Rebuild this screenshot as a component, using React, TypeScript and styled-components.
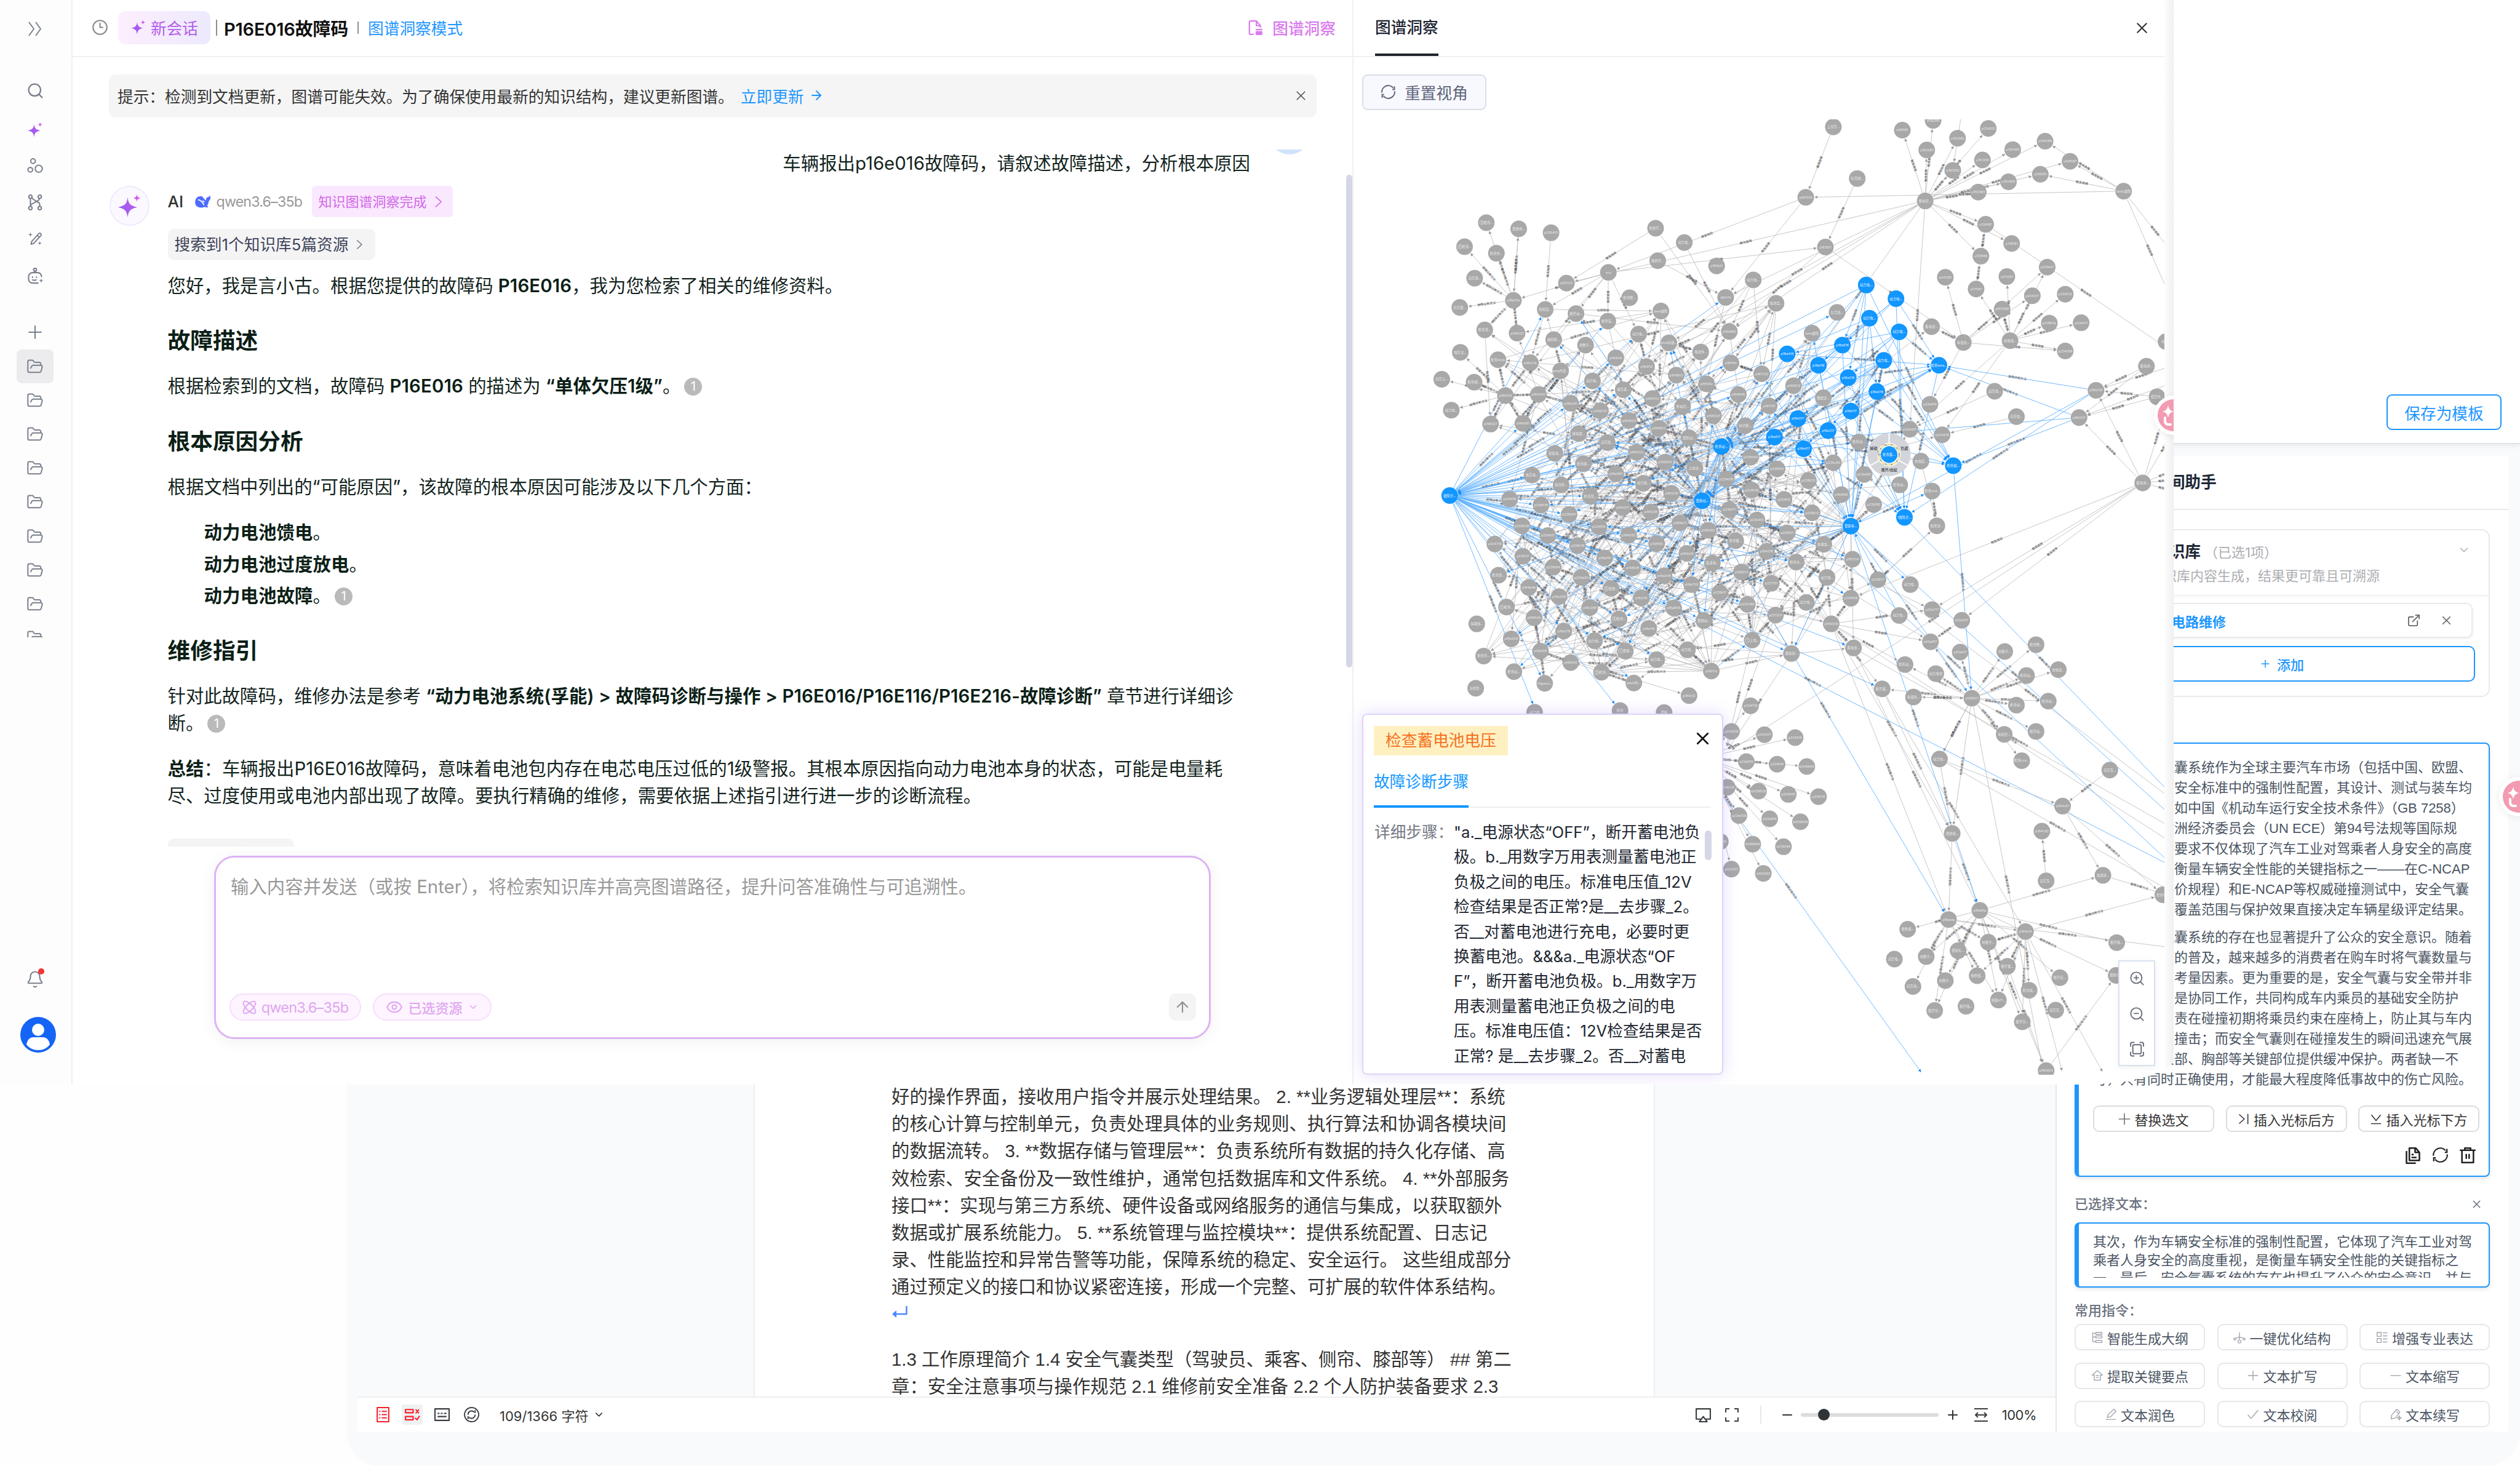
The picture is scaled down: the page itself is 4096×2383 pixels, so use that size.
import React from "react";
import styled, {createGlobalStyle} from "styled-components";
import {
  ArrowRight,
  ArrowUp,
  Bell,
  ChevronDown,
  Clock3,
  ExternalLink,
  Eye,
  FolderOpen,
  Minus,
  Plus,
  Search,
  X,
  ZoomIn,
  ZoomOut,
} from "lucide-react";

const GlobalStyle = createGlobalStyle`
  * {
    box-sizing: border-box;
  }
  body {
    margin: 0;
    background: #fefefe;
    font-family: Inter, "Noto Sans CJK SC", sans-serif;
    font-size: 25.7px;
    overflow: hidden;
  }
  svg {
    display: block;
    flex-shrink: 0;
  }
`;

const Desktop = styled.div`
  position: relative;
  width: 4096px;
  height: 2383px;
  overflow: hidden;
`;

/* ---------- graph data ---------- */

type GNode = [number, number, string];

const blueNodes: GNode[] = [
  [957, 565, "动力电..."], [1013, 607, "动力电..."], [963, 667, "动力电..."], [1019, 709, "动力电..."],
  [912, 750, "p16e516"], [808, 777, "p16e416"], [990, 797, "动力电..."], [1094, 812, "检查bms..."],
  [867, 812, "p16e116"], [923, 850, "p16e216"], [977, 893, "p16e016"], [928, 953, "p16e117"],
  [828, 976, "p16e017"], [885, 1013, "p16e217"], [784, 1033, "p16e517"], [839, 1069, "p16e417"],
  [684, 1062, "检查动..."], [1000, 1087, "检查蓄..."], [1121, 1121, "检查模..."], [172, 1213, "故障诊..."],
  [648, 1229, "更换动..."], [928, 1307, "更换车..."], [1029, 1280, "1故障诊..."],
];

const grayNodes: GNode[] = [
  [895, 78, "上高压..."], [1025, 88, "p161f91"], [1083, 58, "u150281"], [1129, 113, "u150382"], [1187, 83, "p224201"],
  [1071, 149, "u150283"], [1233, 148, "u150483"], [1294, 122, "u108086"], [1176, 180, "u150291"], [1341, 184, "u108067"],
  [1120, 212, "u150282"], [1285, 224, "u108081"], [1225, 247, "u150482"], [1168, 279, "u150383"], [1442, 276, "dcdc故障"],
  [940, 237, "信号线..."], [843, 295, "p161328"], [1068, 306, "整车控..."], [1182, 378, "u108187"], [1231, 437, "u108181"],
  [1173, 476, "u108186"], [1298, 510, "p224e17"], [1222, 539, "u011287"], [1106, 541, "u041281"], [1164, 577, "u011187"],
  [1270, 598, "p224017"], [1332, 593, "p226012"], [1213, 639, "p157268"], [1302, 682, "p22801a"], [1362, 681, "p22e011"],
  [1080, 693, "蓄电池..."], [1332, 768, "p224098"], [1140, 742, "车载充..."], [1228, 736, "充电线..."], [241, 373, "③检查..."],
  [302, 392, "更换充..."], [363, 404, "p226401"], [200, 447, "④检查..."], [260, 467, "检查充..."], [219, 544, "高压线..."],
  [392, 559, "p157012"], [471, 526, "vcu"], [292, 612, "p16e21a"], [191, 634, "高压器..."], [352, 640, "终端温..."],
  [410, 653, "断开动..."], [511, 604, "检查整..."], [560, 390, "检修开..."], [614, 434, "动力电..."], [564, 490, "维修开..."],
  [675, 506, "p161b01"], [744, 549, "动力电..."], [880, 448, "p163b11"], [692, 603, "gwcna"], [787, 621, "电池温..."],
  [570, 645, "bms故障"], [470, 676, "检查第..."], [238, 703, "检查风..."], [299, 713, "p164021"], [368, 733, "继续检..."],
  [428, 750, "用数字..."], [528, 716, "动力电..."], [699, 708, "p16d682"], [855, 713, "bms故障"], [902, 649, "信号线..."],
  [585, 743, "bms存储..."], [645, 771, "电流传..."], [485, 789, "p164114"], [192, 772, "电压主..."], [263, 795, "检查dcdc"],
  [324, 804, "p16c01a"], [381, 829, "bms内部..."], [441, 860, "动力电..."], [543, 816, "p164f12"], [599, 842, "p164802"],
  [702, 805, "p16f14c"], [760, 838, "p161722"], [157, 855, "高压上..."], [218, 864, "检查模..."], [656, 869, "p16f04c"],
  [499, 887, "电压采..."], [820, 875, "p169202"], [277, 905, "p164219"], [339, 902, "p164220"], [400, 929, "p164c91"],
  [554, 914, "p164702"], [611, 939, "整车控..."], [716, 902, "p16464b"], [774, 937, "p161701"], [876, 912, "数据读..."],
  [175, 950, "动力电..."], [456, 952, "p16a020"], [510, 982, "p164502"], [669, 967, "p158223"], [249, 993, "p158227"],
  [310, 991, "p16e081"], [415, 1022, "继电器..."], [566, 1006, "p164602"], [729, 998, "用诊断..."], [469, 1050, "高压监..."],
  [623, 1035, "更换动..."], [943, 1048, "检查动..."], [1039, 1009, "p22e517"], [1100, 1026, "p224218"], [1077, 932, "p22e616"],
  [1199, 892, "高压线..."], [1240, 970, "高压电..."], [370, 1083, "采集线..."], [524, 1080, "p164202"], [424, 1115, "检查模..."],
  [578, 1110, "p158292"], [739, 1095, "p228042"], [895, 1112, "p22bc92"], [634, 1129, "上电动..."], [789, 1131, "p228142"],
  [327, 1150, "电芯电..."], [485, 1146, "p16a080"], [848, 1167, "p228012"], [693, 1162, "p224018"], [953, 1148, "p22b492"],
  [382, 1180, "电流传..."], [537, 1175, "动力电..."], [1060, 1107, "充电插..."], [1020, 1180, "检查动..."], [590, 1206, "p181228"],
  [741, 1196, "p228016"], [437, 1215, "检查风..."], [910, 1210, "p182692"], [1081, 1199, "检查vcd..."], [285, 1224, "p224f16"],
  [802, 1225, "p22f412"], [344, 1242, "p228018"], [498, 1250, "p164201"], [971, 1241, "p22b192"], [397, 1271, "p229087"],
  [551, 1263, "p161228"], [699, 1256, "p22b111"], [855, 1266, "p228012"], [751, 1288, "p22b412"], [308, 1306, "p228028"],
  [453, 1309, "p224812"], [606, 1297, "p184b01"], [1090, 1306, "检查交..."], [357, 1336, "p224b12"], [509, 1335, "p164092"],
  [659, 1320, "p158282"], [808, 1328, "p22f601"], [257, 1362, "p224716"], [562, 1361, "p158192"], [711, 1352, "检查蓄..."],
  [877, 1363, "车辆发..."], [413, 1367, "p228016"], [310, 1400, "p224117"], [769, 1385, "p164218"], [464, 1405, "p16a118"],
  [619, 1391, "p161b09"], [931, 1409, "p161704"], [825, 1418, "检查水..."], [367, 1433, "p228184"], [517, 1436, "p158b18"],
  [667, 1421, "集成电..."], [722, 1448, "p158201"], [264, 1458, "检查界..."], [420, 1465, "p228a20"], [576, 1460, "p16e078"],
  [883, 1465, "动力电..."], [979, 1472, "p228117"], [778, 1483, "p221701"], [628, 1487, "p16e705"], [1040, 1487, "动力电..."],
  [321, 1496, "p164b4b"], [476, 1499, "④更换..."], [681, 1512, "p228b17"], [378, 1524, "p16e208"], [533, 1528, "p16e119"],
  [928, 1529, "p224616"], [844, 1542, "动力电..."], [733, 1548, "p220285"], [1485, 815, "蓄电池..."], [1390, 889, "p160016"],
  [1505, 909, "低压供..."], [1358, 973, "p160017"], [1478, 1174, "蓄电池..."], [1522, 739, "动力..."],
  [279, 1556, "②检查..."], [223, 1608, "车辆熄..."], [331, 1589, "p16954b"], [436, 1558, "p16c288"], [491, 1593, "③检查..."],
  [594, 1559, "p16a806"], [547, 1622, "p16a119"], [651, 1598, "更换动..."], [1019, 1582, "动力电..."], [1081, 1564, "p22e717"],
  [1137, 1597, "p22e517"], [786, 1581, "p221201"], [891, 1608, "p159209"], [288, 1654, "p16e206"], [387, 1630, "p16e216"],
  [445, 1660, "动力电..."], [1078, 1663, "p22e617"], [742, 1658, "①上电..."], [933, 1682, "蓄电池..."], [1134, 1695, "p22e417"],
  [1277, 1672, "检查整..."], [1218, 1693, "用数字..."], [236, 1707, "检查环..."], [343, 1692, "p16e106"], [400, 1727, "p164410"],
  [503, 1692, "①更换..."], [620, 1688, "动力电..."], [562, 1718, "动力电..."], [816, 1699, "蓄电池..."], [1030, 1733, "检查动..."],
  [293, 1755, "检查动..."], [458, 1757, "②检查..."], [665, 1753, "p16f01c"], [1088, 1761, "动力电池"], [1319, 1749, "充电温..."],
  [1259, 1767, "检查动..."], [351, 1791, "03gwcn..."], [519, 1790, "pack内..."], [221, 1806, "冷却管..."], [623, 1829, "p184c12"],
  [987, 1808, "断开蓄..."], [1046, 1833, "车载充..."], [1156, 1837, "p158501"], [1300, 1846, "检查动..."], [1240, 1858, "检查动..."],
  [739, 1860, "p224719"], [332, 1880, "动力电"], [493, 1875, "检查"], [576, 1881, "更换"], [1277, 1939, "断开动..."],
  [1217, 1948, "电机控..."], [703, 1939, "p224519"], [765, 1949, "p224217"], [823, 1958, "p224519"], [1250, 2029, "检查cca..."],
  [1095, 2024, "动力电..."], [1416, 2058, "高压互..."], [731, 2032, "p22e519"], [789, 2040, "p224f19"], [845, 2047, "b009849"],
  [695, 2111, "p224019"], [754, 2123, "b009829"], [810, 2133, "p224919"], [867, 2140, "p224119"], [1327, 2169, "p164c91"],
  [717, 2198, "p22e009"], [775, 2208, "p22e619"], [833, 2217, "b009948"], [1119, 2253, "更换档..."], [1288, 2246, "p164c92"],
  [743, 2286, "b099948"], [801, 2294, "b219094"], [682, 2278, "p22419"], [1296, 2399, "高压互..."], [1403, 2382, "电源状..."],
  [703, 2363, "p224317"], [763, 2376, "b100053"], [1516, 2442, "检查线..."], [1171, 2490, "p16d61a"], [1112, 2518, "p16ea1a"],
  [1035, 2548, "维修或..."], [1257, 2555, "p164c14"], [1130, 2614, "更新标..."], [1187, 2588, "用数字..."], [1429, 2589, "断开维..."],
  [1010, 2640, "高压电..."], [1070, 2632, "用数字..."], [1223, 2662, "断开蓄..."], [1428, 2690, "更换分..."], [1045, 2724, "高压线..."],
  [1106, 2706, "用数字..."], [1166, 2691, "维修或..."], [1322, 2697, "断开高..."], [1264, 2736, "检查电..."], [1086, 2798, "断开空..."],
  [1145, 2785, "断开维..."], [1206, 2766, "测量b71..."], [1314, 2797, "高压互..."], [1251, 2833, "断开空..."], [1296, 2983, "p160603"],
];

type Tone = "gray" | "blue";
type Pt = [number, number];
interface IEdge {
  a: Pt;
  b: Pt;
  tone: Tone;
  label?: string;
}

const FAULT = "触发故障";
const METHOD = "故障诊断方法";
const SHOWN = "出现故障";

// 레이아웃 좌표 -> 화면 좌표
const sx = (v: number) => 8 + v * 0.8625;
const sy = (v: number) => v * 0.52806 - 29;

const inBox = (n: GNode, [x0, y0, x1, y1]: number[]) => n[0] >= x0 && n[0] <= x1 && n[1] >= y0 && n[1] <= y1;

const fan = (hub: Pt, box: number[], tone: Tone, label: string, step = 1, offset = 0): IEdge[] =>
  grayNodes
    .filter((n) => inBox(n, box) && !(n[0] === hub[0] && n[1] === hub[1]))
    .filter((_, i) => i % step === offset)
    .map((n) => ({a: hub, b: [n[0], n[1]], tone, label}));

const links = (tone: Tone, label: string, list: number[][]): IEdge[] =>
  list.map(([x0, y0, x1, y1]) => ({a: [x0, y0], b: [x1, y1], tone, label}));

const core = grayNodes.filter((n) => inBox(n, [230, 620, 960, 1770]));
const mesh: IEdge[] = core.flatMap((n, i) => {
  const t = core[(i * 41 + 17) % core.length];
  const u = core[(i * 7 + 3) % core.length];
  return [
    {a: [n[0], n[1]] as Pt, b: [t[0], t[1]] as Pt, tone: "gray" as Tone, label: i % 2 ? FAULT : METHOD},
    {a: [n[0], n[1]] as Pt, b: [u[0], u[1]] as Pt, tone: "gray" as Tone, label: i % 3 ? FAULT : SHOWN},
  ].filter((e) => Math.hypot(e.a[0] - e.b[0], e.a[1] - e.b[1]) < 620);
});

// 왼쪽 아래에서 오른쪽 위로 향하는 관계
const diagonals: IEdge[] = core.flatMap((n, i) =>
  core
    .filter((t) => {
      const dx = t[0] - n[0];
      const slope = (n[1] - t[1]) / (dx || 1);
      return dx > 110 && dx < 330 && slope > 1.5 && slope < 2.6;
    })
    .filter((_, k) => (k + i) % 5 === 0)
    .slice(0, 3)
    .map((t) => ({a: [n[0], n[1]] as Pt, b: [t[0], t[1]] as Pt, tone: "gray" as Tone, label: METHOD}))
);

const clusterTop = blueNodes.slice(0, 16);
const edges: IEdge[] = [
  ...mesh,
  ...diagonals,
  ...fan([1068, 306], [1000, 40, 1380, 290], "gray", FAULT),
  ...links("gray", FAULT, [
    [1068, 306, 1182, 378], [1068, 306, 1231, 437], [1068, 306, 1173, 476], [1068, 306, 392, 559], [1068, 306, 692, 603],
    [1068, 306, 699, 708], [1068, 306, 585, 743], [1068, 306, 543, 816], [1068, 306, 1039, 1009], [1068, 306, 820, 875],
    [1442, 276, 1341, 184], [1442, 276, 1285, 224], [1442, 276, 1294, 122], [1442, 276, 843, 295], [1442, 276, 1540, 640],
    [1442, 276, 1560, 520], [1140, 0, 1120, 212], [895, 78, 843, 295], [940, 237, 880, 448], [560, 390, 392, 559],
    [843, 295, 471, 526], [843, 295, 692, 603], [471, 526, 880, 448], [471, 526, 292, 612], [471, 526, 410, 653],
    [471, 526, 470, 676], [471, 526, 324, 804], [471, 526, 528, 716], [471, 526, 352, 640], [880, 448, 699, 708],
    [880, 448, 1140, 742], [560, 390, 699, 708], [614, 434, 699, 708], [564, 490, 692, 603], [744, 549, 699, 708],
    [744, 549, 760, 838], [744, 549, 543, 816], [744, 549, 599, 842], [787, 621, 760, 838], [787, 621, 774, 937],
    [787, 621, 702, 805], [787, 621, 656, 869], [1182, 378, 1173, 476], [1173, 476, 1164, 577], [692, 603, 656, 869],
    [363, 404, 352, 640], [302, 392, 292, 612], [570, 645, 543, 816], [570, 645, 566, 1006],
    [1485, 815, 1390, 889], [1505, 909, 1390, 889], [1485, 815, 1358, 973], [1505, 909, 1358, 973], [1560, 800, 1390, 889],
    [1560, 850, 1358, 973], [1478, 1174, 1390, 889], [1478, 1174, 1358, 973], [1478, 1174, 1530, 900], [1478, 1174, 1560, 950],
    [1478, 1174, 1560, 1120], [1478, 1174, 1560, 1160], [1478, 1174, 1560, 1210], [1478, 1174, 1137, 1597],
    [1478, 1174, 1081, 1564], [1478, 1174, 690, 2010], [1478, 1174, 928, 1529], [1182, 378, 1560, 800],
    [1140, 742, 1077, 932], [1228, 736, 1100, 1026], [1228, 736, 1039, 1009], [1199, 892, 1039, 1009],
    [1240, 970, 1100, 1026], [1080, 693, 1140, 742], [1060, 1107, 1090, 1306], [1081, 1199, 1090, 1306],
    [1090, 1306, 979, 1472], [742, 1658, 690, 2010], [816, 1699, 690, 2010], [786, 1581, 690, 2010],
    [1416, 2058, 1327, 2169], [1296, 2399, 1288, 2246], [1137, 1597, 1078, 1663],
  ]),
  ...fan([292, 612], [180, 340, 320, 720], "gray", METHOD),
  ...fan([1140, 742], [1100, 480, 1340, 800], "gray", FAULT, 2, 0),
  ...fan([1228, 736], [1150, 480, 1380, 800], "gray", FAULT),
  ...fan([277, 905], [150, 760, 340, 1010], "gray", METHOD),
  ...fan([339, 902], [240, 700, 520, 1030], "gray", METHOD, 2, 0),
  ...fan([648, 1229], [230, 600, 1100, 1820], "gray", METHOD, 3, 0),
  ...fan([928, 1307], [500, 800, 1120, 1820], "gray", METHOD, 4, 1),
  ...fan([684, 1062], [230, 600, 900, 1500], "gray", METHOD, 4, 2),
  ...fan([665, 1753], [230, 1280, 900, 1840], "gray", METHOD, 4, 0),
  ...fan([742, 1658], [560, 1180, 1000, 1700], "gray", FAULT, 3, 1),
  ...fan([891, 1608], [700, 1300, 1100, 1850], "gray", FAULT, 2, 0),
  ...fan([343, 1692], [210, 1430, 640, 1840], "gray", METHOD, 3, 0),
  ...fan([458, 1757], [250, 1300, 680, 1840], "gray", METHOD, 4, 0),
  ...fan([1156, 1837], [980, 1640, 1330, 2050], "gray", METHOD),
  ...fan([650, 2020], [690, 1840, 880, 2390], "gray", FAULT),
  ...fan([1171, 2490], [1000, 2540, 1440, 2850], "gray", METHOD, 2, 0),
  ...fan([1112, 2518], [1000, 2540, 1300, 2850], "gray", METHOD, 2, 1),
  ...fan([1257, 2555], [1140, 2560, 1440, 2850], "gray", METHOD, 2, 0),
  ...links("gray", METHOD, [
    [891, 1608, 1112, 2518], [891, 1608, 1119, 2253], [933, 1682, 1171, 2490], [987, 1808, 1257, 2555],
    [987, 1808, 1119, 2253], [1119, 2253, 1112, 2518], [1119, 2253, 1171, 2490], [1095, 2024, 1119, 2253],
    [1156, 1837, 1095, 2024], [1156, 1837, 1119, 2253], [1156, 1837, 1290, 2983], [1095, 2024, 1327, 2169],
    [1095, 2024, 1540, 2440], [1171, 2490, 1403, 2382], [1257, 2555, 1516, 2442], [1112, 2518, 1560, 2610],
    [1327, 2169, 1403, 2382], [1327, 2169, 1516, 2442], [933, 1682, 1560, 2260], [891, 1608, 1560, 2310],
    [979, 1472, 1560, 2180], [1046, 1833, 1156, 1837], [1223, 2662, 1296, 2983], [1257, 2555, 1330, 3010],
    [1296, 2983, 1428, 2690], [1257, 2555, 1410, 3010], [1171, 2490, 1296, 2983], [1403, 2382, 1540, 2450],
  ]),
  ...fan([172, 1213], [300, 560, 1000, 1830], "blue", METHOD, 3, 0),
  ...fan([172, 1213], [240, 1350, 700, 1850], "blue", METHOD, 5, 2),
  ...fan([648, 1229], [230, 620, 1000, 1800], "blue", METHOD, 6, 1),
  ...fan([928, 1307], [400, 700, 1120, 1800], "blue", METHOD, 8, 3),
  ...fan([684, 1062], [360, 700, 1000, 1800], "blue", METHOD, 8, 5),
  ...clusterTop.flatMap((n, i) => {
    const targets: Pt[] = [[684, 1062], [648, 1229], [928, 1307], [1094, 812], [1121, 1121], [1029, 1280], [172, 1213]];
    return targets
      .filter((_, k) => (k + i) % 2 === 0 || k < 2)
      .map((t) => ({a: [n[0], n[1]] as Pt, b: t, tone: "blue" as Tone, label: METHOD}));
  }),
  ...links("blue", SHOWN, [
    [957, 565, 912, 750], [957, 565, 923, 850], [1013, 607, 912, 750], [963, 667, 867, 812], [1019, 709, 808, 777],
    [1019, 709, 923, 850], [963, 667, 977, 893], [990, 797, 977, 893], [990, 797, 828, 976], [990, 797, 885, 1013],
    [990, 797, 784, 1033], [1019, 709, 928, 953], [990, 797, 839, 1069],
  ]),
  ...links("blue", METHOD, [
    [1390, 889, 1094, 812], [1390, 889, 1029, 1280], [1390, 889, 928, 1307], [1358, 973, 1094, 812], [1358, 973, 684, 1062],
    [1358, 973, 1121, 1121], [1121, 1121, 1156, 1837], [928, 1307, 1156, 1837], [1029, 1280, 1560, 2180], [928, 1307, 1560, 2240],
    [172, 1213, 335, 1880], [560, 1850, 1070, 3010], [665, 1753, 742, 1658], [648, 1229, 1112, 2518], [684, 1062, 1560, 2390],
    [172, 1213, 1540, 2360], [1019, 1582, 928, 1307], [172, 1213, 493, 1875], [928, 1307, 1171, 2490],
  ]),
];

const Edge = ({a, b, tone, label}: IEdge) => {
  const x0 = sx(a[0]);
  const y0 = sy(a[1]);
  const x1 = sx(b[0]);
  const y1 = sy(b[1]);
  const len = Math.hypot(x1 - x0, y1 - y0) || 1;
  const ux = (x1 - x0) / len;
  const uy = (y1 - y0) / len;
  let angle = (Math.atan2(uy, ux) * 180) / Math.PI;
  if (angle > 90) angle -= 180;
  if (angle < -90) angle += 180;
  const mx = (x0 + x1) / 2;
  const my = (y0 + y1) / 2;
  return (
    <g>
      <line
        x1={x0 + ux * 14}
        y1={y0 + uy * 14}
        x2={x1 - ux * 15}
        y2={y1 - uy * 15}
        stroke={tone === "blue" ? "#62b2ff" : "#b4b4b8"}
        strokeWidth={tone === "blue" ? 0.9 : 0.75}
        markerEnd={`url(#arrow-${tone})`}
      />
      {label && len > 50 && (
        <text x={mx} y={my + 1.8} transform={`rotate(${angle} ${mx} ${my})`} fontSize="5" textAnchor="middle" fill="#3f3f43">
          {label}
        </text>
      )}
    </g>
  );
};

const Graph = () => (
  <svg width="1318" height="1553" viewBox="0 0 1318 1553">
    <defs>
      {(["gray", "blue"] as Tone[]).map((t) => (
        <marker key={t} id={`arrow-${t}`} viewBox="0 0 6 6" refX="5" refY="3" markerWidth="5" markerHeight="5" markerUnits="userSpaceOnUse" orient="auto">
          <path d="M0 0 6 3 0 6z" fill={t === "blue" ? "#1890ff" : "#9a9aa0"} />
        </marker>
      ))}
    </defs>
    {edges.map((e, i) => (
      <Edge key={i} {...e} />
    ))}
    {grayNodes.map(([x, y, label], i) => (
      <g key={i}>
        <circle cx={sx(x)} cy={sy(y)} r="13.5" fill="#a8a8a8" />
        <text x={sx(x)} y={sy(y) + 2} fontSize="5.4" textAnchor="middle" fill="#e8e8e8">{label}</text>
      </g>
    ))}
    {/* 선택된 노드의 원형 메뉴 */}
    <g transform={`translate(${sx(1000)} ${sy(1087)})`}>
      <circle r="27" fill="none" stroke="#d3d5da" strokeWidth="16" />
      <path d="M0-18V-35M-15 9-31 18M15 9 31 18" stroke="#fff" strokeWidth="2" />
      <circle r="16.5" fill="none" stroke="#f6e3a4" strokeWidth="3" />
      <circle r="16.5" fill="none" stroke="#8fa9c4" strokeWidth="2" strokeDasharray="3 7" />
      <text x="-25" y="-8" fontSize="6" textAnchor="middle" fill="#222">解锁</text>
      <text x="25" y="-8" fontSize="6" textAnchor="middle" fill="#222">隐藏</text>
      <text x="0" y="27" fontSize="6" textAnchor="middle" fill="#222">展开/收起</text>
    </g>
    {blueNodes.map(([x, y, label], i) => (
      <g key={i}>
        <circle cx={sx(x)} cy={sy(y)} r="13.5" fill="#1296ff" />
        <text x={sx(x)} y={sy(y) + 2} fontSize="5.4" textAnchor="middle" fill="#e3f2ff">{label}</text>
      </g>
    ))}
  </svg>
);

/* ---------- icons ---------- */

interface IIcon {
  size: number;
}

const Sparkle = ({size}: IIcon) => (
  <svg width={size} height={size} viewBox="0 0 24 24">
    <defs>
      <linearGradient id="spark" x1="0" y1="1" x2="1" y2="0">
        <stop offset="0" stopColor="#8b5cf6" />
        <stop offset="1" stopColor="#c65bea" />
      </linearGradient>
    </defs>
    <path d="M10.5 3.5c.9 6.1 2.2 8.2 9.5 9.7-7.3 1.5-8.6 3.6-9.5 9.8C9.6 16.800 8.300 14.700 1 13.200c7.300-1.500 8.600-3.600 9.500-9.700z" fill="url(#spark)" />
    <path d="M19.500.5c.35 2.300.9 3.100 3.500 3.700-2.600.6-3.150 1.400-3.500 3.700-.35-2.300-.9-3.100-3.500-3.700 2.600-.6 3.150-1.400 3.500-3.700z" fill="#d35be8" />
  </svg>
);

const Circles = ({size}: IIcon) => (
  <svg width={size} height={size} viewBox="0 0 24 24" fill="none" stroke="#7a808c" strokeWidth="1.9">
    <circle cx="9" cy="4.5" r="3.5" />
    <circle cx="4.800" cy="17.500" r="3.500" />
    <circle cx="17.500" cy="16" r="5.300" />
  </svg>
);

const Branch = ({size}: IIcon) => (
  <svg width={size} height={size} viewBox="0 0 24 24" fill="none" stroke="#7a808c" strokeWidth="1.9">
    <circle cx="5" cy="3.500" r="2.500" />
    <circle cx="19" cy="3.500" r="2.500" />
    <circle cx="5" cy="20.500" r="2.500" />
    <circle cx="19" cy="20.500" r="2.500" />
    <path d="M5 6v12M19 18v-3q0-2-2-3l-4-2.500Q7.500 6.500 7 5M18.500 6q-.5 3-4 4.500L8 14q-3 1.500-3 4" />
  </svg>
);

const MagicPen = ({size, color = "#7a808c"}: IIcon & {color?: string}) => (
  <svg width={size} height={size} viewBox="0 0 24 24" fill="none" stroke={color} strokeWidth="1.800" strokeLinejoin="round">
    <path d="M6 20.500 7 16 17.500 4.500q1.500-1.500 3 0t0 3L10 19l-4 1.500zM15.500 7l2.800 2.800" />
    <path d="M5 2.500 5.800 5l2.700.9-2.700.9L5 9.300l-.8-2.500-2.700-.9L4.200 5zM19 16l.7 2 2.300.8-2.300.8-.7 2-.7-2-2.300-.8 2.300-.8z" fill={color} stroke="none" />
  </svg>
);

const Robot = ({size}: IIcon) => (
  <svg width={size} height={size} viewBox="0 0 24 24" fill="none" stroke="#7a808c" strokeWidth="1.800" strokeLinecap="round">
    <circle cx="12" cy="3" r="2" />
    <path d="M12 5v2M16 21.500H8.500a5.500 5.500 0 0 1-5.500-5.500v-3.500A5.500 5.500 0 0 1 8.500 7h7a5.500 5.500 0 0 1 5.500 5.500" />
    <path d="M8.500 13v.6M14 13v.6M8.500 17q2.500 1.500 5 0" />
    <path d="m20.500 15 .8 2.300 2.300.8-2.300.8-.8 2.300-.8-2.300-2.300-.8 2.300-.8z" fill="#7a808c" stroke="none" />
  </svg>
);

const FileBox = ({size}: IIcon) => (
  <svg width={size} height={size} viewBox="0 0 24 24" fill="none" stroke="#d97bee" strokeWidth="2">
    <path d="M9 22H4.500Q2.500 22 2.500 20V4q0-2 2-2H13l6 7v3M13 2v7h6" />
    <rect x="12" y="17" width="10" height="6" rx="1" fill="#d97bee" stroke="none" />
    <path d="M12 14.800h10" />
  </svg>
);

const Whale = ({size}: IIcon) => (
  <svg width={size} height={size} viewBox="0 0 24 24">
    <path d="M1 13C1 6 6 3.500 11 4.500c1 2.500 3.500 4 5.500 6C16 8 16.500 6 19 5.500c1-.2 2-1 2.500-2.500 1.500 3 1 6-1.500 8-.5 3.500-1 5-2.500 6.500l2 2c-2 .8-4 0-5-.5-6 2.500-13.500.5-13.500-6z" fill="#4d6bfe" />
    <path d="M5 9c3 0 5.500 2.500 8.500 7.500M11 10.500l3 2" stroke="#fff" strokeWidth="1.500" fill="none" />
  </svg>
);

const Orbit = ({size}: IIcon) => (
  <svg width={size} height={size} viewBox="0 0 24 24" fill="none" stroke="#dfa6f0" strokeWidth="2">
    <ellipse cx="12" cy="12" rx="13.500" ry="5.500" transform="rotate(45 12 12)" />
    <ellipse cx="12" cy="12" rx="13.500" ry="5.500" transform="rotate(-45 12 12)" />
  </svg>
);

const Refresh = ({size, color = "#60657a"}: IIcon & {color?: string}) => (
  <svg width={size} height={size} viewBox="0 0 24 24" fill="none" stroke={color} strokeWidth="2">
    <path d="M2 13a10 10 0 0 1 17.500-7.500M21.500 3v5h-3M22 11a10 10 0 0 1-17.500 7.500M2.500 21v-5h3" />
  </svg>
);

const Frame = ({size}: IIcon) => (
  <svg width={size} height={size} viewBox="0 0 24 24" fill="none" stroke="#6b6f7a" strokeWidth="1.900">
    <path d="M8 1.500H4Q2 1.500 2 4v4M16 1.500h4q2 0 2 2.500v4M8 22.500H4q-2 0-2-2.500v-4M16 22.500h4q2 0 2-2.500v-4" />
    <rect x="5.500" y="5" width="13" height="14" rx="2" />
  </svg>
);

const UserFace = ({size}: IIcon) => (
  <svg width={size} height={size} viewBox="0 0 60 60">
    <circle cx="30" cy="30" r="29" fill="#1465f5" />
    <circle cx="30" cy="22" r="10" fill="#fff" />
    <path d="M11 46q2-12 12-12h14q10 0 12 12-7 9-19 9t-19-9z" fill="#fff" />
  </svg>
);

const Assist = () => (
  <svg width="52" height="52" viewBox="0 0 52 52">
    <circle cx="26" cy="26" r="26" fill="#f29bb1" />
    <path d="M17 10q1.500 9 9.500 10-8 1-9.500 10-1.500-9-9.500-10 8-1 9.500-10z" fill="#fff" />
    <path d="M12 30v5q0 6 6 6h3" stroke="#fff" strokeWidth="4" fill="none" strokeLinecap="round" />
  </svg>
);

const Strokes = ({size, d, color = "#3a3d40", width = 2}: IIcon & {d: string; color?: string; width?: number}) => (
  <svg width={size} height={size} viewBox="0 0 24 24" fill="none" stroke={color} strokeWidth={width} strokeLinejoin="round">
    <path d={d} />
  </svg>
);

/* ---------- back window: editor ---------- */

const BackWindow = styled.section`
  position: absolute;
  left: 563px;
  top: 0;
  width: 3533px;
  height: 2383px;
  display: flex;
  flex-direction: column;
  background: #f9fafc;
  border-radius: 0 0 56px 56px;
  overflow: hidden;
`;

const EditorHeader = styled.header`
  height: 722px;
  flex-shrink: 0;
  display: flex;
  align-items: flex-end;
  justify-content: flex-end;
  padding: 0 30px 21px 0;
  background: #fff;
  border-bottom: 2px solid #e3e4e6;
  box-shadow: 0 3px 8px rgba(0, 0, 0, 0.06);
`;

const SaveButton = styled.button`
  width: 187px;
  height: 58px;
  border: 2px solid #1e96ff;
  border-radius: 9px;
  background: #fff;
  color: #1e96ff;
  font: inherit;
  font-size: 25.7px;
  padding: 0;
`;

const EditorBody = styled.div`
  flex: 1;
  display: flex;
  padding: 19px 19px 56px 18px;
  min-height: 0;
`;

const EditorColumn = styled.div`
  width: 2760px;
  display: flex;
  flex-direction: column;
`;

const Canvas = styled.div`
  flex: 1;
  min-height: 0;
  overflow: hidden;
  padding-left: 646px;
`;

const Page = styled.article`
  width: 1461px;
  height: 1529px;
  padding: 1020px 0 0 222px;
  background: #fff;
  box-shadow: 0 0 3px rgba(0, 0, 0, 0.16);
  font-family: "Liberation Sans", "Noto Sans CJK SC", sans-serif;
  font-size: 29.4px;
  line-height: 44.2px;
  color: #333;
  white-space: nowrap;
`;

const DocLine = styled.div`
  height: 44.2px;
`;

const ReturnMark = styled.div`
  height: 73px;
  padding-top: 7px;
`;

const StatusBar = styled.footer`
  height: 57px;
  flex-shrink: 0;
  display: flex;
  align-items: center;
  padding: 0 31px 0 24px;
  background: #fff;
  border-top: 2px solid #eeeeee;
  font-size: 22px;
  color: #333;
`;

const BarIcon = styled.span<{$active?: boolean}>`
  width: 34px;
  height: 33px;
  margin-right: 14px;
  display: flex;
  align-items: center;
  justify-content: center;
  border-radius: 3px;
  background: ${({$active}) => ($active ? "#eff1f3" : "transparent")};
`;

const BarText = styled.span`
  margin-left: 15px;
  margin-right: 8px;
`;

const BarSpacer = styled.span<{$width?: number}>`
  flex: ${({$width}) => ($width ? `0 0 ${$width}px` : "1")};
`;

const BarDivider = styled.i`
  width: 2px;
  height: 29px;
  margin: 0 30px 0 34px;
  background: #e8e8e8;
`;

const Slider = styled.div`
  width: 224px;
  height: 6px;
  margin: 0 11px 0 10px;
  padding-left: 28px;
  display: flex;
  align-items: center;
  border-radius: 3px;
  background: #ddd;
`;

const Knob = styled.i`
  width: 19px;
  height: 19px;
  border-radius: 50%;
  background: #2f3437;
`;

const Percent = styled.span`
  margin-left: 22px;
  letter-spacing: -0.5px;
`;

const AssistantPanel = styled.aside`
  width: 736px;
  display: flex;
  flex-direction: column;
  background: #fff;
  border-left: 2px solid #e5e7eb;
  font-size: 22px;
  color: #4b5563;
`;

const PanelTitle = styled.h2`
  height: 88px;
  flex-shrink: 0;
  margin: 0;
  padding-left: 157px;
  border-bottom: 2px solid #e8eaed;
  font-size: 25.7px;
  line-height: 85px;
  font-weight: 600;
  color: #1f2937;
`;

const PanelBody = styled.div`
  padding: 31px 30px 0 29px;
  display: flex;
  flex-direction: column;
`;

const LibraryCard = styled.section`
  height: 273px;
  border: 2px solid #e8eaec;
  border-radius: 14px;
`;

const LibraryHead = styled.div`
  height: 107px;
  padding: 11px 29px 0 126px;
  border-bottom: 2px solid #f0f1f2;
  box-shadow: 0 4px 6px rgba(0, 0, 0, 0.02);
  color: #acaeb2;
`;

const LibraryRow = styled.div`
  height: 42px;
  display: flex;
  align-items: center;
  justify-content: space-between;
`;

const LibraryName = styled.b`
  font-size: 25.7px;
  font-weight: 600;
  color: #1f2937;
  margin-right: 6px;
`;

const LibraryHint = styled.div`
  margin-left: -50px;
  line-height: 42px;
  white-space: nowrap;
`;

const LibraryItem = styled.div`
  height: 57px;
  margin: 11px 26px 13px 20px;
  padding: 0 29px 0 134px;
  display: flex;
  align-items: center;
  gap: 30px;
  border: 2px solid #e8eaec;
  border-radius: 10px;
  box-shadow: 1px 2px 3px rgba(0, 0, 0, 0.05);
  color: #1e96ff;
  font-weight: 600;
`;

const ItemName = styled.span`
  flex: 1;
`;

const AddButton = styled.div`
  height: 58px;
  margin: 0 22px 0 20px;
  display: flex;
  align-items: center;
  justify-content: center;
  gap: 9px;
  border: 2px solid #1e96ff;
  border-radius: 10px;
  color: #1e96ff;
  font-weight: 500;
`;

const BlueCard = styled.section<{$height: number; $gap: number}>`
  height: ${({$height}) => $height}px;
  margin-top: ${({$gap}) => $gap}px;
  border: 2px solid #1e96ff;
  border-left-width: 7px;
  border-radius: 8px;
  padding-left: 23px;
  background: #fff;
  box-shadow: 0 3px 6px rgba(0, 0, 0, 0.1);
  font-family: "Liberation Sans", "Noto Sans CJK SC", sans-serif;
  white-space: nowrap;
`;

const AnswerText = styled.p<{$top: number}>`
  margin: ${({$top}) => $top}px 0 0;
  font-size: 22px;
  line-height: 33.07px;
`;

const InsertRow = styled.div`
  display: grid;
  grid-template-columns: repeat(3, 197px);
  gap: 18.5px;
  margin-top: 26px;
`;

const SmallButton = styled.div<{$soft?: boolean}>`
  height: 43px;
  display: flex;
  align-items: center;
  justify-content: center;
  gap: 6px;
  border: 2px solid ${({$soft}) => ($soft ? "#e5e7eb" : "#dcdcdc")};
  border-radius: 10px;
  color: ${({$soft}) => ($soft ? "#4b5563" : "#333")};
  font-size: 22px;
`;

const ToolRow = styled.div`
  display: flex;
  justify-content: flex-end;
  gap: 17px;
  margin-top: 24px;
  padding-right: 20px;
`;

const SectionLabel = styled.div<{$top: number}>`
  margin-top: ${({$top}) => $top}px;
  height: 30px;
  line-height: 30px;
  padding-right: 11px;
  display: flex;
  align-items: center;
  justify-content: space-between;
  font-weight: 500;
  color: #6b7280;
`;

const SelectedText = styled.div`
  height: 73px;
  margin-top: 15px;
  overflow: hidden;
  line-height: 29.5px;
`;

const CommandGrid = styled.div`
  display: grid;
  grid-template-columns: repeat(3, 1fr);
  gap: 19.5px;
  margin-top: 7px;
`;

const FloatingAssist = styled.div<{$x: number; $y: number}>`
  position: absolute;
  left: ${({$x}) => $x}px;
  top: ${({$y}) => $y}px;
  width: 64px;
  height: 64px;
  padding: 6px;
  border-radius: 50%;
  background: #fff;
  box-shadow: 0 2px 14px rgba(0, 0, 0, 0.08);
`;

const docLines = [
  "好的操作界面，接收用户指令并展示处理结果。 2. **业务逻辑处理层**：系统",
  "的核心计算与控制单元，负责处理具体的业务规则、执行算法和协调各模块间",
  "的数据流转。 3. **数据存储与管理层**：负责系统所有数据的持久化存储、高",
  "效检索、安全备份及一致性维护，通常包括数据库和文件系统。 4. **外部服务",
  "接口**：实现与第三方系统、硬件设备或网络服务的通信与集成，以获取额外",
  "数据或扩展系统能力。 5. **系统管理与监控模块**：提供系统配置、日志记",
  "录、性能监控和异常告警等功能，保障系统的稳定、安全运行。 这些组成部分",
  "通过预定义的接口和协议紧密连接，形成一个完整、可扩展的软件体系结构。",
];

const answerOne = [
  "首先，安全气囊系统作为全球主要汽车市场（包括中国、欧盟、",
  "日本等）车辆安全标准中的强制性配置，其设计、测试与装车均",
  "符合法规，例如中国《机动车运行安全技术条件》（GB 7258）",
  "以及联合国欧洲经济委员会（UN ECE）第94号法规等国际规",
  "范。这些强制要求不仅体现了汽车工业对驾乘者人身安全的高度",
  "重视，同时是衡量车辆安全性能的关键指标之一——在C-NCAP",
  "（中国新车评价规程）和E-NCAP等权威碰撞测试中，安全气囊",
  "系统的数量、覆盖范围与保护效果直接决定车辆星级评定结果。",
];

const answerTwo = [
  "其次，安全气囊系统的存在也显著提升了公众的安全意识。随着",
  "汽车安全知识的普及，越来越多的消费者在购车时将气囊数量与",
  "配置作为重要考量因素。更为重要的是，安全气囊与安全带并非",
  "相互替代，而是协同工作，共同构成车内乘员的基础安全防护",
  "网。安全带负责在碰撞初期将乘员约束在座椅上，防止其与车内",
  "硬物发生二次撞击；而安全气囊则在碰撞发生的瞬间迅速充气展",
  "开，为乘员头部、胸部等关键部位提供缓冲保护。两者缺一不",
  "可，只有同时正确使用，才能最大程度降低事故中的伤亡风险。",
];

const commands: [string, string][] = [
  ["智能生成大纲", "M3 2v18h5M3 11h5M3 4h5M9 2h12v4H9zM9 9h12v4H9zM9 18h12v4H9z"],
  ["一键优化结构", "M12 2v9M12 11 4 14M12 11l8 3M12 11v6M12 17a3 3 0 1 0 .1 0M3 13a2 2 0 1 0 .1 0M21 13a2 2 0 1 0 .1 0"],
  ["增强专业表达", "M2 2h8v8H2zM2 14h8v8H2zM13 3h9M13 9h9M13 15h9M13 21h9"],
  ["提取关键要点", "M6 21V11H2L12 2l10 9h-4v10zM9 12h6M9 16h6"],
  ["文本扩写", "M12 2v20M2 12h20"],
  ["文本缩写", "M2 12h20"],
  ["文本润色", "M2 22h20M5 18l2-6L18 2l4 4-11 11z"],
  ["文本校阅", "M2 13l6 7L22 4"],
  ["文本续写", "M3 21l1-7L13 3q2-1 4 1l3 4-8 11zM13 6l5 5M19 15l1 3 3 1-3 1-1 3-1-3-3-1 3-1z"],
];

const Editor = () => (
  <BackWindow>
    <EditorHeader>
      <SaveButton>保存为模板</SaveButton>
    </EditorHeader>
    <EditorBody>
      <EditorColumn>
        <Canvas>
          <Page>
            {docLines.map((l) => (
              <DocLine key={l}>{l}</DocLine>
            ))}
            <ReturnMark>
              <svg width="27" height="24" viewBox="0 0 27 24">
                <path d="M24.500 1v13H7" stroke="#4d88ff" strokeWidth="2.500" fill="none" />
                <path d="M1 14 8 8v12z" fill="#4d88ff" />
              </svg>
            </ReturnMark>
            <DocLine>1.3 工作原理简介 1.4 安全气囊类型（驾驶员、乘客、侧帘、膝部等） ## 第二</DocLine>
            <DocLine>章：安全注意事项与操作规范 2.1 维修前安全准备 2.2 个人防护装备要求 2.3</DocLine>
          </Page>
        </Canvas>
        <StatusBar>
          <BarIcon>
            <Strokes size={25} color="#f5222d" d="M3 1h18v22H3zM6 7h2M10 7h8M6 12h2M10 12h8M6 17h2M10 17h8" />
          </BarIcon>
          <BarIcon $active>
            <Strokes size={25} color="#f5222d" d="M1 4h12v5H1zM1 15h12v5H1zM17 4l5 6M22 4l-5 6M16 17l3 3 4-6" />
          </BarIcon>
          <BarIcon>
            <Strokes size={25} d="M1 3h22v18H1zM5 10h3M10 10h3M15 10h4M5 15h14" />
          </BarIcon>
          <BarIcon>
            <Strokes size={25} width={1.8} d="M12 1a11 11 0 1 0 .1 0M6.500 12a5.500 5.500 0 0 1 9.500-4M17.500 5v4.500M17.500 12a5.500 5.500 0 0 1-9.500 4M6.500 19v-4.500" />
          </BarIcon>
          <BarText>109/1366 字符</BarText>
          <ChevronDown size={19} strokeWidth={2} />
          <BarSpacer />
          <Strokes size={25} d="M8 19H1V3h22v16h-7M12 15l6 8H6z" />
          <BarSpacer $width={22} />
          <Strokes size={24} d="M8 2H2v6M16 2h6v6M8 22H2v-6M16 22h6v-6" />
          <BarDivider />
          <Minus size={24} />
          <Slider>
            <Knob />
          </Slider>
          <Plus size={24} />
          <BarSpacer $width={22} />
          <Strokes size={24} d="M1 2h22M1 22h22M3 12h18M7 8l-4 4 4 4M17 8l4 4-4 4" />
          <Percent>100%</Percent>
        </StatusBar>
      </EditorColumn>
      <AssistantPanel>
        <PanelTitle>空间助手</PanelTitle>
        <PanelBody>
          <LibraryCard>
            <LibraryHead>
              <LibraryRow>
                <span>
                  <LibraryName>知识库</LibraryName>（已选1项）
                </span>
                <ChevronDown size={22} strokeWidth={1.8} />
              </LibraryRow>
              <LibraryHint>基于知识库内容生成，结果更可靠且可溯源</LibraryHint>
            </LibraryHead>
            <LibraryItem>
              <ItemName>电路维修</ItemName>
              <ExternalLink size={23} color="#666" strokeWidth={1.9} />
              <X size={23} color="#666" strokeWidth={1.8} />
            </LibraryItem>
            <AddButton>
              <Plus size={20} strokeWidth={1.8} />
              添加
            </AddButton>
          </LibraryCard>
          <BlueCard $height={706} $gap={74}>
            <AnswerText $top={22}>
              {answerOne.map((l) => (
                <React.Fragment key={l}>{l}<br /></React.Fragment>
              ))}
            </AnswerText>
            <AnswerText $top={11}>
              {answerTwo.map((l) => (
                <React.Fragment key={l}>{l}<br /></React.Fragment>
              ))}
            </AnswerText>
            <InsertRow>
              <SmallButton>
                <Strokes size={20} color="#777" d="M12 1v22M1 12h22" />
                替换选文
              </SmallButton>
              <SmallButton>
                <Strokes size={20} d="M3 3l10 9-10 9M20 2v20" />
                插入光标后方
              </SmallButton>
              <SmallButton>
                <Strokes size={20} d="M3 4l9 11 9-11M2 21h20" />
                插入光标下方
              </SmallButton>
            </InsertRow>
            <ToolRow>
              <Strokes size={28} color="#222" width={2.2} d="M7 2h9l5 6v11H7zM15 2v6h6M10 11h3M10 15h7M3 6v17h13" />
              <Refresh size={27} color="#222" />
              <Strokes size={28} color="#222" width={2.2} d="M1 5h22M8 5V2h8v3M4 5v17h16V5M10 10v7M14 10v7" />
            </ToolRow>
          </BlueCard>
          <SectionLabel $top={29}>
            已选择文本：
            <X size={21} strokeWidth={1.8} />
          </SectionLabel>
          <BlueCard $height={106} $gap={15}>
            <SelectedText>
              其次，作为车辆安全标准的强制性配置，它体现了汽车工业对驾<br />
              乘者人身安全的高度重视，是衡量车辆安全性能的关键指标之<br />
              一，最后，安全气囊系统的存在也提升了公众的安全意识，并与
            </SelectedText>
          </BlueCard>
          <SectionLabel $top={22}>常用指令：</SectionLabel>
          <CommandGrid>
            {commands.map(([name, d]) => (
              <SmallButton key={name} $soft>
                <Strokes size={20} color="#a3a7ae" width={1.7} d={d} />
                {name}
              </SmallButton>
            ))}
          </CommandGrid>
        </PanelBody>
      </AssistantPanel>
    </EditorBody>
    <FloatingAssist $x={3499} $y={1263}>
      <Assist />
    </FloatingAssist>
  </BackWindow>
);

/* ---------- front window ---------- */

const FrontWindow = styled.section`
  position: absolute;
  left: 0;
  top: 0;
  width: 3533px;
  height: 1763px;
  display: flex;
  background: #fff;
  border-bottom-right-radius: 160px 42px;
  overflow: hidden;
`;

const Rail = styled.nav`
  width: 118px;
  flex-shrink: 0;
  display: flex;
  flex-direction: column;
  align-items: center;
  border-right: 2px solid #efeff1;
  background: #fdfdfe;
  color: #7a808c;
  padding-right: 2px;
`;

const RailSlot = styled.div<{$height: number; $drop?: number}>`
  height: ${({$height}) => $height}px;
  padding-top: ${({$drop}) => $drop ?? 0}px;
  flex-shrink: 0;
  display: flex;
  align-items: center;
  justify-content: center;
`;

const FolderList = styled.div`
  height: 468px;
  flex-shrink: 0;
  overflow: hidden;
`;

const FolderSlot = styled.div<{$active?: boolean}>`
  width: 60px;
  height: 55.2px;
  display: flex;
  align-items: center;
  justify-content: center;
  border-radius: 8px;
  background: ${({$active}) => ($active ? "#ececee" : "transparent")};
`;

const BellSlot = styled.div`
  position: relative;
  margin-top: 541px;
`;

const RedDot = styled.i`
  position: absolute;
  right: 0;
  top: -3px;
  width: 10px;
  height: 10px;
  border-radius: 50%;
  background: #f5342f;
`;

const FaceSlot = styled.div`
  margin: 45px 0 0 9px;
`;

const Chat = styled.main`
  width: 2082px;
  flex-shrink: 0;
  position: relative;
  display: flex;
  flex-direction: column;
  border-right: 2px solid #f0f0f2;
`;

const ChatHeader = styled.header`
  height: 93px;
  flex-shrink: 0;
  display: flex;
  align-items: center;
  padding: 0 27px 2px 31px;
  border-bottom: 2px solid #f0f0f2;
  color: #8a8a8a;
`;

const NewChat = styled.div`
  width: 150px;
  height: 54px;
  margin: 0 9px 0 16px;
  display: flex;
  align-items: center;
  justify-content: center;
  gap: 8px;
  border-radius: 12px;
  background: linear-gradient(100deg, #fdeffd, #ece9fe);
  color: #b45fea;
`;

const Bar = styled.i<{$height: number}>`
  width: 2px;
  height: ${({$height}) => $height}px;
  background: #8f8f8f;
`;

const ChatTitle = styled.h1`
  margin: 0 15px 0 11px;
  font-size: 29px;
  font-weight: 600;
  letter-spacing: -0.2px;
  color: #111;
`;

const Mode = styled.span`
  flex: 1;
  margin-left: 15px;
  color: #1e96ff;
`;

const InsightLink = styled.span`
  display: flex;
  align-items: center;
  gap: 14px;
  color: #d97bee;
  font-weight: 500;
`;

const Notice = styled.div`
  height: 70px;
  width: 1963px;
  margin: 28px 0 52px 59px;
  padding: 0 13px 2px 14px;
  flex-shrink: 0;
  display: flex;
  align-items: center;
  border-radius: 10px;
  background: #f5f5f5;
  color: #333;
`;

const NoticeLink = styled.span`
  flex: 1;
  margin-left: 11px;
  display: flex;
  align-items: center;
  gap: 8px;
  color: #1e96ff;
`;

const Thread = styled.div`
  height: 1133px;
  flex-shrink: 0;
  overflow: hidden;
  font-size: 29.4px;
  line-height: 44px;
  color: #13241d;
`;

const UserRow = styled.div`
  height: 44px;
  margin-top: 1px;
  padding-right: 69px;
  display: flex;
  justify-content: flex-end;
  gap: 31px;
`;

const UserDisc = styled.i`
  width: 66px;
  height: 66px;
  margin-top: -59px;
  border-radius: 50%;
  background: #cfe3fb;
`;

const AiRow = styled.div`
  margin-top: 14px;
  padding-left: 59.5px;
  display: flex;
  gap: 30px;
`;

const AiDisc = styled.div`
  width: 65px;
  height: 65px;
  flex-shrink: 0;
  display: flex;
  align-items: center;
  justify-content: center;
  border: 2px solid #efeafd;
  border-radius: 50%;
  background: #fbf9ff;
`;

const Answer = styled.div`
  white-space: nowrap;
`;

const Meta = styled.div`
  height: 51px;
  display: flex;
  align-items: center;
  font-size: 23.2px;
  color: #999;
`;

const AiName = styled.b`
  width: 43px;
  font-size: 26px;
  font-weight: 500;
  color: #333;
`;

const Model = styled.span`
  width: 155px;
  padding-left: 8px;
  letter-spacing: -0.8px;
`;

const DoneTag = styled.span`
  height: 51px;
  width: 229px;
  margin-left: 8px;
  padding-left: 11px;
  display: flex;
  align-items: center;
  gap: 9px;
  border-radius: 6px;
  background: #fae8ff;
  color: #d168e6;
  font-size: 22px;
`;

const SourcePill = styled.div`
  width: 337px;
  height: 51px;
  margin-top: 19px;
  padding-left: 11px;
  display: flex;
  align-items: center;
  gap: 10px;
  border-radius: 10px;
  background: #f4f4f5;
  color: #3f4459;
  font-size: 25.7px;
`;

const Para = styled.p<{$top: number}>`
  margin: ${({$top}) => $top}px 0 0;
`;

const Heading = styled.h3<{$top: number}>`
  margin: ${({$top}) => $top}px 0 0;
  font-size: 36.7px;
  line-height: 48px;
  font-weight: 600;
  color: #0c1f17;
`;

const Bold = styled.b`
  font-weight: 600;
  letter-spacing: 0.12px;
  color: #0c1f17;
`;

const Causes = styled.ul`
  margin: 30px 0 0;
  padding: 0 0 0 59px;
  list-style: none;
  display: flex;
  flex-direction: column;
  gap: 7.5px;
`;

const Cite = styled.span`
  display: inline-flex;
  align-items: center;
  justify-content: center;
  width: 29px;
  height: 29px;
  margin-left: 6px;
  vertical-align: 3px;
  border-radius: 50%;
  background: #bababa;
  color: #fff;
  font-size: 20px;
  line-height: 29px;
`;

const NextPill = styled.div`
  width: 205px;
  height: 51px;
  margin-top: 47px;
  border-radius: 10px;
  background: #f4f4f5;
`;

const ScrollThumb = styled.i<{$x: number; $y: number; $w: number; $h: number}>`
  position: absolute;
  left: ${({$x}) => $x}px;
  top: ${({$y}) => $y}px;
  width: ${({$w}) => $w}px;
  height: ${({$h}) => $h}px;
  border-radius: 6px;
  background: #d6d7e6;
`;

const Composer = styled.div`
  width: 1620px;
  height: 298px;
  margin: 15px 0 0 230px;
  padding: 25px 21px 27px 22px;
  display: flex;
  flex-direction: column;
  justify-content: space-between;
  border: 3px solid #ddb3f3;
  border-radius: 33px;
  background: #fff;
  box-shadow: 0 4px 26px rgba(0, 0, 0, 0.06);
  font-size: 29.4px;
  color: #999;
`;

const Placeholder = styled.div`
  padding-left: 2px;
  line-height: 46px;
`;

const ComposerRow = styled.div`
  display: flex;
  gap: 19px;
`;

const Chip = styled.span<{$width: number}>`
  width: ${({$width}) => $width}px;
  height: 44px;
  display: flex;
  align-items: center;
  justify-content: center;
  gap: 8px;
  border: 2px solid #f6defb;
  border-radius: 22px;
  background: #fdf4ff;
  color: #dfa6f0;
  font-size: 22px;
  font-weight: 500;
`;

const ChipModel = styled.span`
  font-size: 23.5px;
  font-weight: 400;
  letter-spacing: -0.8px;
`;

const SendButton = styled.span`
  width: 44px;
  height: 44px;
  margin-left: auto;
  display: flex;
  align-items: center;
  justify-content: center;
  border-radius: 10px;
  background: #f4f4f5;
  color: #8f8f8f;
`;

const Insight = styled.section`
  width: 1318px;
  flex-shrink: 0;
  position: relative;
  background: #fff;
`;

const InsightHeader = styled.header`
  height: 93px;
  display: flex;
  align-items: center;
  justify-content: space-between;
  padding: 0 22px 0 35px;
  border-bottom: 2px solid #f0f0f2;
`;

const InsightTab = styled.span`
  height: 91px;
  line-height: 90px;
  font-weight: 500;
  color: #1c2230;
  border-bottom: 4px solid #20242c;
`;

const ResetButton = styled.div`
  width: 202px;
  height: 58px;
  margin: 28px 0 15px 14px;
  padding-bottom: 1px;
  display: flex;
  align-items: center;
  justify-content: center;
  gap: 14px;
  border: 2px solid #dadde4;
  border-radius: 9px;
  background: #f8f9fe;
  color: #60657a;
`;

const EdgeShade = styled.div`
  flex: 1;
  background: linear-gradient(90deg, #fdfdfd, #efefef);
`;

const StepPopup = styled.div`
  position: absolute;
  left: 14px;
  top: 1160px;
  width: 587px;
  height: 587px;
  padding: 18px 15px 0 17px;
  border: 2px solid #ddd4f7;
  border-radius: 8px;
  background: #fff;
  box-shadow: 0 0 28px rgba(124, 82, 240, 0.2);
`;

const PopupHead = styled.div`
  display: flex;
  align-items: flex-start;
  justify-content: space-between;
`;

const PopupTag = styled.span`
  width: 218px;
  height: 48px;
  line-height: 47px;
  text-align: center;
  background: #fff0c2;
  color: #f5701d;
`;

const PopupClose = styled.span`
  padding-top: 4px;
`;

const PopupTabs = styled.div`
  height: 85px;
  margin-right: 3px;
  border-bottom: 2px solid #eeeeee;
`;

const PopupTab = styled.span`
  display: inline-block;
  height: 85px;
  line-height: 86px;
  border-bottom: 4px solid #1296ff;
  color: #1296ff;
`;

const Steps = styled.div`
  height: 395px;
  margin-top: 20px;
  display: flex;
  overflow: hidden;
  line-height: 40.4px;
  color: #222731;
  white-space: nowrap;
`;

const StepLabel = styled.span`
  width: 129px;
  flex-shrink: 0;
  margin-left: 1px;
  color: #757985;
`;

const ZoomBox = styled.div`
  position: absolute;
  left: 1243px;
  top: 1561px;
  width: 60px;
  height: 172px;
  padding: 14px 0 13px;
  display: flex;
  flex-direction: column;
  align-items: center;
  justify-content: space-between;
  border: 2px solid #d9e1f0;
  background: #fff;
  color: #6b6f7a;
  box-shadow: 0 2px 10px rgba(0, 0, 0, 0.06);
`;

const stepLines = [
  "\"a._电源状态“OFF”，断开蓄电池负",
  "极。b._用数字万用表测量蓄电池正",
  "负极之间的电压。标准电压值_12V",
  "检查结果是否正常?是__去步骤_2。",
  "否__对蓄电池进行充电，必要时更",
  "换蓄电池。&&&a._电源状态“OF",
  "F”，断开蓄电池负极。b._用数字万",
  "用表测量蓄电池正负极之间的电",
  "压。标准电压值：12V检查结果是否",
  "正常? 是__去步骤_2。否__对蓄电",
];

export default function App() {
  return (
    <Desktop>
      <GlobalStyle />
      <Editor />
      <FrontWindow>
        <Rail>
          <RailSlot $height={94}>
            <Strokes size={24} color="#7a808c" width={2} d="M2 1l8 11-8 11M13 1l8 11-8 11" />
          </RailSlot>
          <RailSlot $height={106}>
            <Search size={29} strokeWidth={1.9} />
          </RailSlot>
          <RailSlot $height={22}>
            <Sparkle size={26} />
          </RailSlot>
          <RailSlot $height={96}>
            <Circles size={26} />
          </RailSlot>
          <RailSlot $height={22}>
            <Branch size={26} />
          </RailSlot>
          <RailSlot $height={96}>
            <MagicPen size={26} />
          </RailSlot>
          <RailSlot $height={26}>
            <Robot size={28} />
          </RailSlot>
          <RailSlot $height={106} $drop={50}>
            <Plus size={34} strokeWidth={1.5} />
          </RailSlot>
          <FolderList>
            {Array.from({length: 9}, (_, i) => (
              <FolderSlot key={i} $active={i === 0}>
                <FolderOpen size={28} strokeWidth={1.7} />
              </FolderSlot>
            ))}
          </FolderList>
          <BellSlot>
            <Bell size={30} strokeWidth={1.7} />
            <RedDot />
          </BellSlot>
          <FaceSlot>
            <UserFace size={60} />
          </FaceSlot>
        </Rail>

        <Chat>
          <ChatHeader>
            <Clock3 size={27} strokeWidth={1.9} />
            <NewChat>
              <Sparkle size={25} />
              新会话
            </NewChat>
            <Bar $height={26} />
            <ChatTitle>P16E016故障码</ChatTitle>
            <Bar $height={20} />
            <Mode>图谱洞察模式</Mode>
            <InsightLink>
              <FileBox size={26} />
              图谱洞察
            </InsightLink>
          </ChatHeader>
          <Notice>
            提示：检测到文档更新，图谱可能失效。为了确保使用最新的知识结构，建议更新图谱。
            <NoticeLink>
              立即更新
              <ArrowRight size={24} strokeWidth={1.9} />
            </NoticeLink>
            <X size={25} strokeWidth={1.6} color="#555" />
          </Notice>
          <Thread>
            <UserRow>
              车辆报出p16e016故障码，请叙述故障描述，分析根本原因
              <UserDisc />
            </UserRow>
            <AiRow>
              <AiDisc>
                <Sparkle size={40} />
              </AiDisc>
              <Answer>
                <Meta>
                  <AiName>AI</AiName>
                  <Whale size={28} />
                  <Model>qwen3.6–35b</Model>
                  <DoneTag>
                    知识图谱洞察完成
                    <Strokes size={20} color="#d168e6" d="M6 2l11 10L6 22" />
                  </DoneTag>
                </Meta>
                <SourcePill>
                  搜索到1个知识库5篇资源
                  <Strokes size={17} color="#6b6f7c" d="M6 2l11 10L6 22" />
                </SourcePill>
                <Para $top={20}>
                  您好，我是言小古。根据您提供的故障码 <Bold>P16E016</Bold>，我为您检索了相关的维修资料。
                </Para>
                <Heading $top={43}>故障描述</Heading>
                <Para $top={28}>
                  根据检索到的文档，故障码 <Bold>P16E016</Bold> 的描述为 <Bold>“单体欠压1级”</Bold>。<Cite>1</Cite>
                </Para>
                <Heading $top={44}>根本原因分析</Heading>
                <Para $top={28}>根据文档中列出的“可能原因”，该故障的根本原因可能涉及以下几个方面：</Para>
                <Causes>
                  <li><Bold>动力电池馈电</Bold>。</li>
                  <li><Bold>动力电池过度放电</Bold>。</li>
                  <li><Bold>动力电池故障</Bold>。<Cite>1</Cite></li>
                </Causes>
                <Heading $top={43}>维修指引</Heading>
                <Para $top={28}>
                  针对此故障码，维修办法是参考 <Bold>“动力电池系统(孚能) &gt; 故障码诊断与操作 &gt; P16E016/P16E116/P16E216-故障诊断”</Bold> 章节进行详细诊<br />
                  断。<Cite>1</Cite>
                </Para>
                <Para $top={30}>
                  <Bold>总结</Bold>：车辆报出P16E016故障码，意味着电池包内存在电芯电压过低的1级警报。其根本原因指向动力电池本身的状态，可能是电量耗<br />
                  尽、过度使用或电池内部出现了故障。要执行精确的维修，需要依据上述指引进行进一步的诊断流程。
                </Para>
                <NextPill />
              </Answer>
            </AiRow>
          </Thread>
          <Composer>
            <Placeholder>输入内容并发送（或按 Enter），将检索知识库并高亮图谱路径，提升问答准确性与可追溯性。</Placeholder>
            <ComposerRow>
              <Chip $width={214}>
                <Orbit size={23} />
                <ChipModel>qwen3.6–35b</ChipModel>
              </Chip>
              <Chip $width={193}>
                <Eye size={28} strokeWidth={1.8} />
                已选资源
                <ChevronDown size={18} strokeWidth={2} />
              </Chip>
              <SendButton>
                <ArrowUp size={28} strokeWidth={1.8} />
              </SendButton>
            </ComposerRow>
          </Composer>
          <ScrollThumb $x={2070} $y={284} $w={10} $h={801} />
        </Chat>

        <Insight>
          <InsightHeader>
            <InsightTab>图谱洞察</InsightTab>
            <X size={29} strokeWidth={1.7} color="#333" />
          </InsightHeader>
          <ResetButton>
            <Refresh size={25} />
            重置视角
          </ResetButton>
          <Graph />
          <StepPopup>
            <PopupHead>
              <PopupTag>检查蓄电池电压</PopupTag>
              <PopupClose>
                <X size={33} strokeWidth={1.9} color="#111" />
              </PopupClose>
            </PopupHead>
            <PopupTabs>
              <PopupTab>故障诊断步骤</PopupTab>
            </PopupTabs>
            <Steps>
              <StepLabel>详细步骤：</StepLabel>
              <div>
                {stepLines.map((l) => (
                  <div key={l}>{l}</div>
                ))}
              </div>
            </Steps>
            <ScrollThumb $x={555} $y={188} $w={11} $h={48} />
          </StepPopup>
          <ZoomBox>
            <ZoomIn size={27} strokeWidth={1.7} />
            <ZoomOut size={27} strokeWidth={1.7} />
            <Frame size={25} />
          </ZoomBox>
        </Insight>
        <EdgeShade />
        <FloatingAssist $x={3501} $y={643}>
          <Assist />
        </FloatingAssist>
      </FrontWindow>
    </Desktop>
  );
}
